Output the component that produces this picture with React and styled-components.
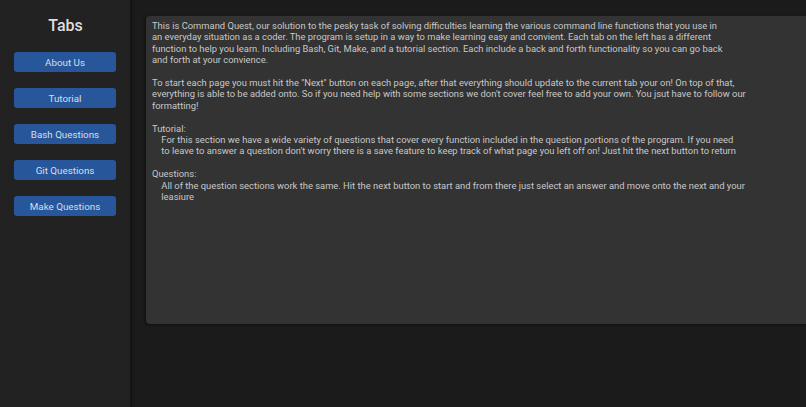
import React from 'react';
import styled, {createGlobalStyle} from 'styled-components';

const GlobalStyle = createGlobalStyle`
  html, body {
    margin: 0;
    padding: 0;
    background: #1b1b1b;
    font-family: Roboto, "Liberation Sans", sans-serif;
  }
`;

const Page = styled.div`
  display: flex;
  width: 806px;
  height: 407px;
  overflow: hidden;
  background: #1b1b1b;
`;

const Sidebar = styled.div`
  width: 130px;
  flex-shrink: 0;
  background: #222222;
  box-shadow: 1px 0 3px rgba(0, 0, 0, 0.5);
  display: flex;
  flex-direction: column;
  align-items: center;
  padding-top: 15px;
  box-sizing: border-box;
`;

const Title = styled.div`
  color: #dedede;
  font-size: 16px;
  font-weight: 500;
  line-height: 22px;
  margin-bottom: 15px;
  margin-left: 1px;
`;

const TabList = styled.div`
  display: flex;
  flex-direction: column;
  gap: 16px;
`;

const TabButton = styled.div`
  width: 102px;
  height: 20px;
  box-sizing: border-box;
  background: #27579a;
  border-radius: 3px;
  color: #d6deea;
  font-size: 9.8px;
  display: flex;
  align-items: center;
  justify-content: center;
  cursor: pointer;
  &:hover {
    background: #2d63ad;
  }
`;

const Main = styled.div`
  flex: 1;
  padding: 16px 0 0 16px;
  overflow: hidden;
`;

const TextPanel = styled.div`
  width: 664px;
  height: 308px;
  box-sizing: border-box;
  background: #333333;
  border-radius: 4px;
  box-shadow: -1px 1px 3px rgba(0, 0, 0, 0.45);
  padding: 4px 6px;
  color: #c8c8c8;
  font-size: 9.4px;
  line-height: 11.4px;
  white-space: pre;
`;

const tabs = ['About Us', 'Tutorial', 'Bash Questions', 'Git Questions', 'Make Questions'];

const aboutText = `This is Command Quest, our solution to the pesky task of solving difficulties learning the various command line functions that you use in
an everyday situation as a coder. The program is setup in a way to make learning easy and convient. Each tab on the left has a different
function to help you learn. Including Bash, Git, Make, and a tutorial section. Each include a back and forth functionality so you can go back
and forth at your convience.

To start each page you must hit the "Next" button on each page, after that everything should update to the current tab your on! On top of that,
everything is able to be added onto. So if you need help with some sections we don't cover feel free to add your own. You jsut have to follow our
formatting!

Tutorial:
    For this section we have a wide variety of questions that cover every function included in the question portions of the program. If you need
    to leave to answer a question don't worry there is a save feature to keep track of what page you left off on! Just hit the next button to return

Questions:
    All of the question sections work the same. Hit the next button to start and from there just select an answer and move onto the next and your
    leasiure`;

// about us page with the tab list on the left
class App extends React.Component {
    render() {
        return (
            <Page>
                <GlobalStyle/>
                <Sidebar>
                    <Title>Tabs</Title>
                    <TabList>
                        {tabs.map(tab => (
                            <TabButton key={tab}>{tab}</TabButton>
                        ))}
                    </TabList>
                </Sidebar>
                <Main>
                    <TextPanel>{aboutText}</TextPanel>
                </Main>
            </Page>
        );
    }
}

export default App;
